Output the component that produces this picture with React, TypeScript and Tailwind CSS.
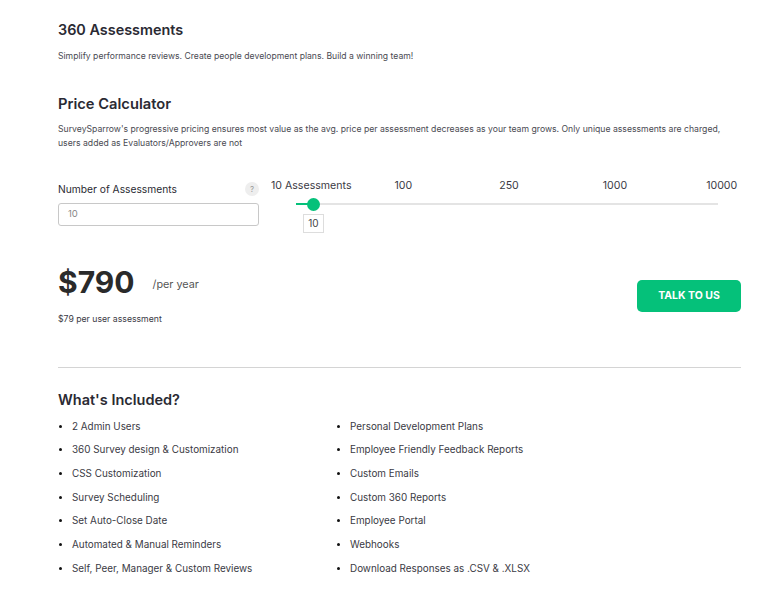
const leftItems = [
  '2 Admin Users',
  '360 Survey design & Customization',
  'CSS Customization',
  'Survey Scheduling',
  'Set Auto-Close Date',
  'Automated & Manual Reminders',
  'Self, Peer, Manager & Custom Reviews',
]

const rightItems = [
  'Personal Development Plans',
  'Employee Friendly Feedback Reports',
  'Custom Emails',
  'Custom 360 Reports',
  'Employee Portal',
  'Webhooks',
  'Download Responses as .CSV & .XLSX',
]

const FeatureList = ({ items, className }: { items: string[]; className: string }) => (
  <ul className={className}>
    {items.map((item) => (
      <li key={item} className="flex h-[23.67px] items-center text-[9.9px] text-[#3a3a44]">
        <span className="ml-[1px] mr-[10px] h-[3px] w-[3px] rounded-full bg-[#111]" />
        <span>{item}</span>
      </li>
    ))}
  </ul>
)

export default function App() {
  return (
    <div className="h-[592px] w-[772px] overflow-hidden bg-white pl-[58px] pr-[31px] pt-[20px] font-['Inter',sans-serif] text-[#2a2a33]">
      {/* Header */}
      <h1 className="text-[14.4px] font-semibold leading-[20px]">360 Assessments</h1>
      <p className="mt-[10px] text-[8.65px] leading-[12px] text-[#4a4a52]">
        Simplify performance reviews. Create people development plans. Build a winning team!
      </p>

      {/* Price calculator */}
      <h2 className="mt-[32px] text-[14.7px] font-semibold leading-[20px]">Price Calculator</h2>
      <p className="mt-[8px] w-[680px] text-[8.67px] leading-[14px] text-[#4a4a52]">
        SurveySparrow's progressive pricing ensures most value as the avg. price per assessment decreases as your team
        grows. Only unique assessments are charged, users added as Evaluators/Approvers are not
      </p>

      <div className="mt-[29px] flex">
        <div className="w-[201px] pt-[3px]">
          <div className="flex items-center justify-between">
            <span className="text-[10.25px] leading-[14px]">Number of Assessments</span>
            <span className="flex h-[14px] w-[14px] items-center justify-center rounded-full bg-[#eeeeee] text-[8px] text-[#999]">?</span>
          </div>
          <div className="mt-[7px] flex h-[23px] items-center rounded-[3px] border border-[#c8c8c8] pl-[9px] text-[9.5px] text-[#888]">
            10
          </div>
        </div>

        <div className="ml-[12px]">
          <div className="flex text-[10.6px] leading-[14px] text-[#3a3a44]">
            <span>10 Assessments</span>
            <span className="ml-[43px]">100</span>
            <span className="ml-[87px]">250</span>
            <span className="ml-[84px]">1000</span>
            <span className="ml-[79px]">10000</span>
          </div>
          <div className="relative ml-[25px] mt-[10px] h-[2px] w-[422px] bg-[#e4e4e4]">
            <div className="h-[2px] w-[12px] bg-[#05c17a]" />
            <div className="absolute left-[11px] top-[-5.5px] h-[13px] w-[13px] rounded-full bg-[#05c17a]" />
            <div className="absolute left-[7px] top-[11px] flex h-[19px] w-[21px] items-center justify-center border border-[#dddddd] text-[10px] text-[#444]">
              10
            </div>
          </div>
        </div>
      </div>

      {/* Price */}
      <div className="mt-[36px] flex items-start justify-between">
        <div>
          <div className="flex items-center">
            <span className="text-[30px] font-bold leading-[40px] text-[#2a2a2a]">$790</span>
            <span className="ml-[18px] mt-[7px] text-[10.8px] text-[#555]">/per year</span>
          </div>
          <p className="mt-[11px] text-[8.7px] leading-[12px] text-[#3a3a44]">$79 per user assessment</p>
        </div>
        <button className="mt-[18px] h-[32px] w-[104px] rounded-[5px] bg-[#05c17a] text-[10.5px] font-bold text-white">
          TALK TO US
        </button>
      </div>

      <hr className="mt-[42px] border-t border-[#d4d4d4]" />

      {/* Included */}
      <h2 className="mt-[23px] text-[14.5px] font-semibold leading-[18px]">What's Included?</h2>
      <div className="mt-[5.4px] flex">
        <FeatureList items={leftItems} className="w-[278px]" />
        <FeatureList items={rightItems} className="flex-1" />
      </div>
    </div>
  )
}
